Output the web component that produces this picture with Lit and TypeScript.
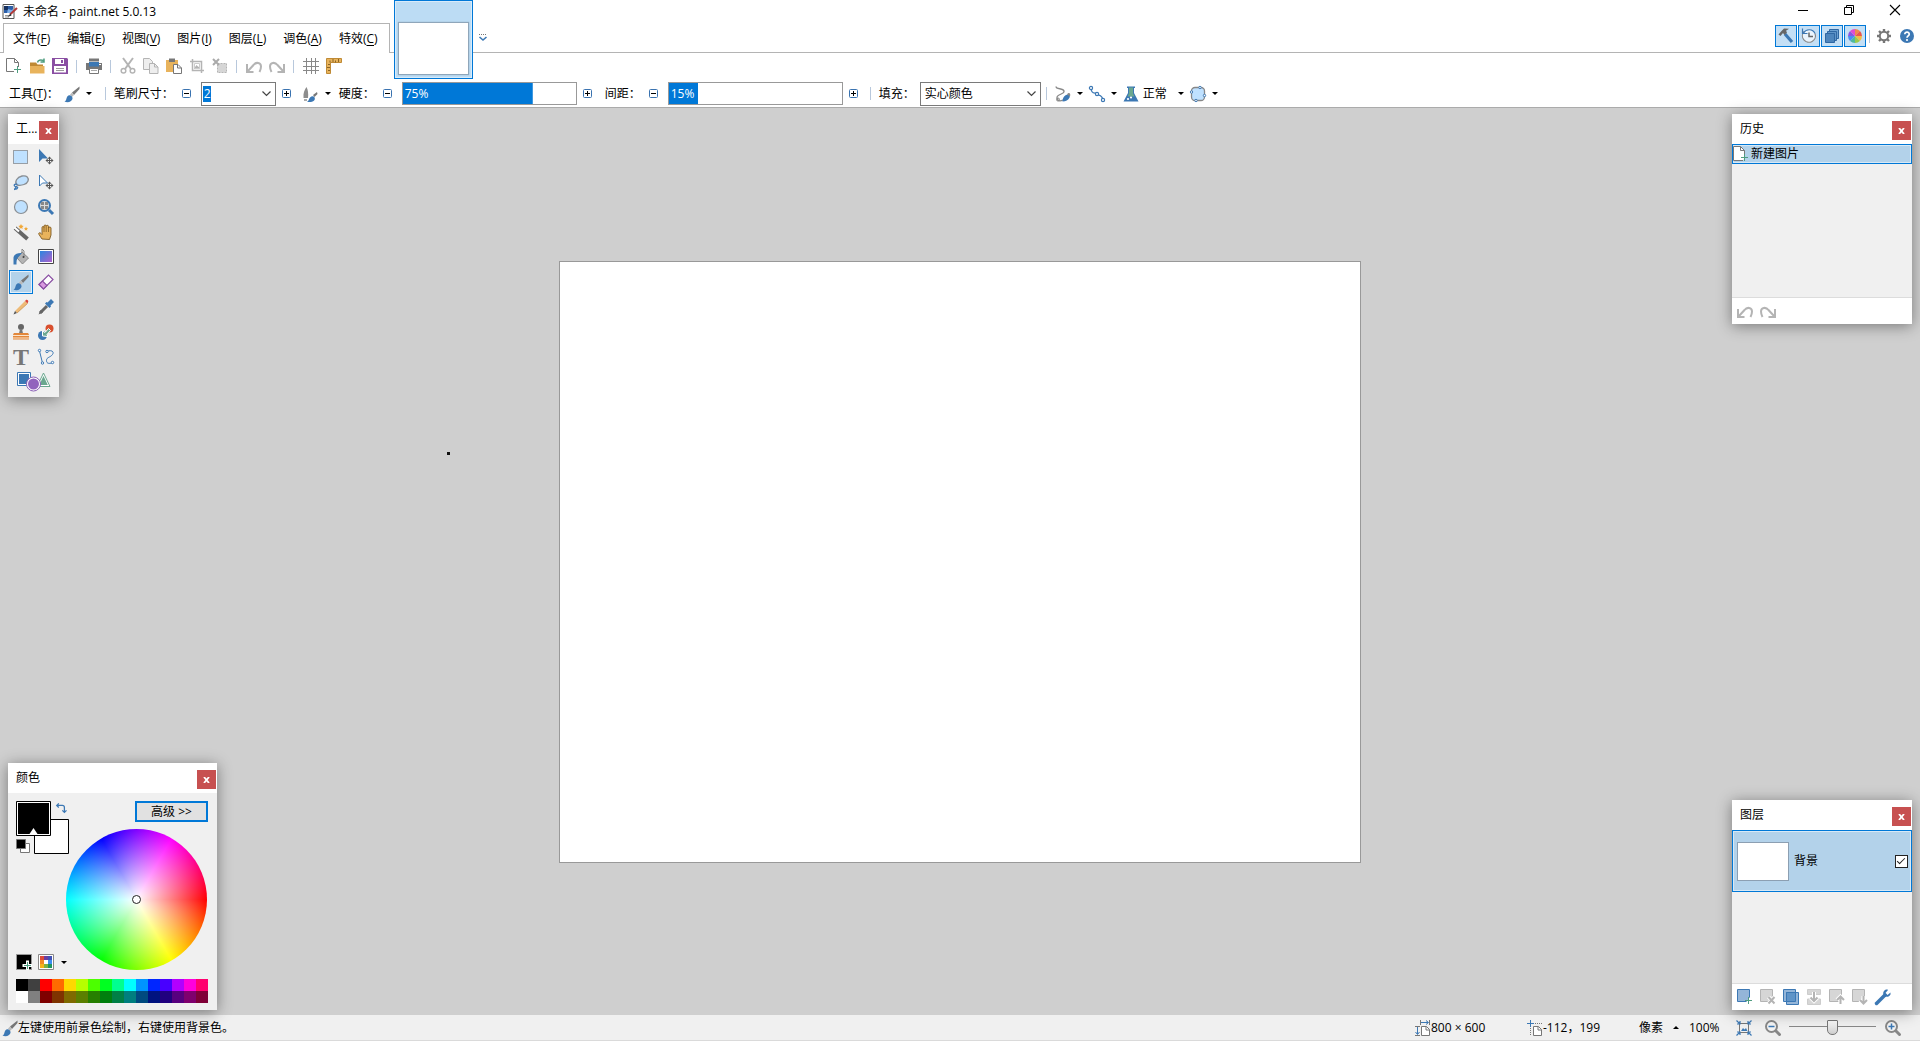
import { LitElement, html, css, svg, TemplateResult } from "lit";
import { customElement, property, state } from "lit/decorators.js";
import { classMap } from "lit/directives/class-map.js";

const GRAY = "#777";
const LIGHT = "#b4b4b4";
const BLUE = "#3c78b4";
const GREEN = "#4f9d80";
const AMBER = "#e8b35c";
const AMBER_DARK = "#bf8a35";

const page = svg`<path d="M2.5 .5h7l4 4V14.5h-11z" fill="#fff" stroke="${GRAY}"/><path d="M9.5 .5v4h4" fill="none" stroke="${GRAY}"/>`;
const undo = svg`<path d="M1 6v8h6.500" fill="none" stroke="${LIGHT}" stroke-width="2"/><path d="M1.500 13.500 7.500 7C10 3.800 15 4.200 15 8.500c0 2-.5 3.500-1.500 5.500" fill="none" stroke="${LIGHT}" stroke-width="2"/>`;
const redo = svg`<g transform="matrix(-1 0 0 1 16 0)">${undo}</g>`;
const brush = svg`<path d="M15.500 .5 8 6.500 10 9 15.500 3z" fill="${GRAY}"/><path d="M8 6.500 6 8.500 8 11 10 9z" fill="#bbb"/><path d="M.5 15.500c2-.5 1.500-2.500 2.500-4.500 1-2 3-2.500 4.500-1s1.500 3.500-.5 5-4.500 1.500-6.500 .5z" fill="${BLUE}"/>`;
const mover = svg`<path d="M11.500 8v7M8 11.500h7" stroke="#555"/><path d="M11.500 7.500l2 2.200h-4zM11.500 15.500l2-2.200h-4zM7.500 11.500l2.200-2v4zM15.500 11.500l-2.200-2v4z" fill="#555"/>`;
const lens = svg`<path d="M10.500 10.500 14.500 14.500" stroke="#888" stroke-width="3" stroke-linecap="round"/><circle cx="6.500" cy="6.500" r="5.500" fill="#f4f4f4" stroke="#888" stroke-width="2"/>`;

const ICONS: Record<string, TemplateResult> = {
  app: svg`<path d="M1 .5h11v14H1z" fill="#fff" stroke="#555"/><path d="M2 2h9v7H2z" fill="#2b5ea8"/><path d="M2 2h4v4H2z" fill="#16315f"/><path d="M6 5c2 0 3 2 5 0v4H5z" fill="#7fb0e8"/><path d="M3 11.500h6M3 13h4" stroke="#999"/><path d="M15 4 8 10.500" stroke="#b13a3a" stroke-width="2"/><path d="M8.500 9.500 5.500 13l4-1.500z" fill="#333"/>`,
  newFile: svg`<path d="M8 13.500H.5V.5h8l4 4V9" fill="#fff" stroke="${GRAY}"/><path d="M8.500 .5v4h4" fill="none" stroke="${GRAY}"/><path d="M11.500 8v7M8 11.500h7" stroke="${GREEN}"/>`,
  open: svg`<path d="M1 4.500h6l1.500 2H14V8H3.500L1 14z" fill="${AMBER_DARK}"/><path d="M1 8h14.500v7.500H1z" fill="${AMBER}"/><path d="M8.500 4.500C9 2 11.500 1.500 14.500 2.500M15 .5v3.500h-3.500" fill="none" stroke="${GREEN}" stroke-width="1.500"/>`,
  save: svg`<path d="M0 0h15l1 1v15H0z" fill="#8a4fa3"/><path d="M3 1h9v5H3z" fill="#fff"/><path d="M9 2h2v3H9z" fill="#8a4fa3"/><path d="M2 8h12v6.500H2z" fill="#fff"/><path d="M4 10.500h8M4 12.500h8" stroke="#999"/>`,
  print: svg`<path d="M3 .5h10v3H3z" fill="${GRAY}"/><path d="M0 5h16v7H0z" fill="${GRAY}"/><path d="M3 4h10v4.500H3z" fill="${BLUE}"/><path d="M3.500 10.500h9v5h-9z" fill="#fff" stroke="${GRAY}"/><path d="M5 12.500h6" stroke="#aaa"/><path d="M13 6h2v1h-2z" fill="#fff"/>`,
  cut: svg`<path d="M3 0 11 11M13 0 5 11" stroke="${LIGHT}" stroke-width="2"/><circle cx="3.500" cy="12.800" r="2.300" fill="none" stroke="${LIGHT}" stroke-width="1.500"/><circle cx="12.500" cy="12.800" r="2.300" fill="none" stroke="${LIGHT}" stroke-width="1.500"/>`,
  copy: svg`<path d="M.5 .5h6l3 3v8h-9z" fill="#eee" stroke="${LIGHT}"/><path d="M6.500 5.500h5l3.500 3.500v6.500H6.500z" fill="#eee" stroke="${LIGHT}"/><path d="M11.500 5.500v3.500h3.500" fill="none" stroke="${LIGHT}"/>`,
  paste: svg`<path d="M0 2h12v12H0z" fill="${AMBER}"/><path d="M3 .5h6V4H3z" fill="#777"/><path d="M7.500 6.500h4.500l3.500 3.500v5.500h-8z" fill="#fff" stroke="${GRAY}"/><path d="M11.500 6.500V10h4" fill="none" stroke="${GRAY}"/>`,
  crop: svg`<path d="M3.500 1v11.500H15M1 3.500h11.500V15" fill="none" stroke="${LIGHT}" stroke-width="1.500"/><path d="M5 10.500 7.500 7l2 2 1-1v3H5z" fill="${LIGHT}"/><path d="M5.500 5.500h5v5h-5z" fill="none" stroke="#ccc"/>`,
  deselect: svg`<path d="M5.500 5.500h9v9h-9z" fill="#d6d6d6" stroke="${LIGHT}" stroke-dasharray="2 1"/><path d="M1 1 7 7M7 1 1 7" stroke="#aaa" stroke-width="2"/>`,
  undo,
  redo,
  grid: svg`<path d="M3.500 0v16M8.500 0v16M12.500 0v16M0 3.500h16M0 8.500h16M0 12.500h16" stroke="#888"/>`,
  ruler: svg`<path d="M.5 .5h15v4h-11v11h-4z" fill="${AMBER}" stroke="${AMBER_DARK}"/><path d="M4 2.500v2M7 1v3M9.500 2.500v2M12.500 1v3M2 6.500h2M1 9.500h3M2 12.500h2" stroke="#8a6424"/>`,
  brush,
  brushShape: svg`<path d="M3.500 1C5 4 5.500 7 5 12H.5C0 7 1.500 4 3.500 1z" fill="#8d8d8d"/><path d="M14 6 10 9l1.500 2L14.500 8z" fill="${GRAY}"/><path d="M4 15.500c2-.5 1.500-2.500 3-4s3.500-2 4.500-.2 0 4-2.500 4.500-4 .2-5-.3z" fill="${BLUE}"/><path d="M1 13h3v2H1z" fill="#aaa"/>`,
  smooth: svg`<path d="M1 .5C1 4 8 1.500 9 5S1 8 2 12s4 3 6 2" fill="none" stroke="#888" stroke-width="1.300"/><circle cx="3" cy="13.500" r="1.500" fill="none" stroke="#888"/><path d="M7.500 15.500c0-4 3-7.500 6.500-6.800 2 1 .5 6.300-6.500 6.800z" fill="${BLUE}"/><path d="M12 8.500c2-3 4-1 3 2z" fill="#888"/>`,
  curve: svg`<path d="M2 2c0 7 5 4 6 6s5 0 6 6" fill="none" stroke="${BLUE}" stroke-width="1.300"/><g fill="#fff" stroke="${BLUE}" stroke-width="1.200"><circle cx="2" cy="2" r="1.600"/><circle cx="8" cy="8" r="1.600"/><circle cx="14" cy="14" r="1.600"/></g>`,
  flask: svg`<path d="M4 .5h8v1.500h-1v5l4.500 8.500H.5L5 7V2H4z" fill="${BLUE}"/><path d="M6 1.500h4v6l1.500 3h-7l1.500-3z" fill="#6aa78f"/><circle cx="5" cy="13" r="1.100" fill="#fff"/><circle cx="8" cy="11.500" r="1.100" fill="#fff"/>`,
  clip: svg`<rect x="1.500" y="1.500" width="13" height="13" rx="3.500" fill="#bfe1ff" stroke="#888" stroke-width="1.300"/><g fill="#fff" stroke="${BLUE}"><circle cx="10" cy="1.500" r="1.200"/><circle cx="1.500" cy="6" r="1.200"/><circle cx="14.500" cy="9.500" r="1.200"/><circle cx="6" cy="14.500" r="1.200"/></g>`,
  hammer: svg`<path d="M7 6 14 14" stroke="${BLUE}" stroke-width="3.200"/><path d="M.5 6.500 3.500 3 6 .5l5 .2-3 2 1 1.800L6.500 7 5 5 2.500 8z" fill="#666"/>`,
  clock: svg`<circle cx="8" cy="8" r="6.500" fill="#eaf4fc"/><path d="M3 3.500A6.500 6.500 0 1 0 14 5.500" fill="none" stroke="#888" stroke-width="1.200"/><path d="M2.500 5A6.500 6.500 0 0 1 14 5.500" fill="none" stroke="${BLUE}" stroke-width="1.200"/><path d="M1.500 .5v5h5" fill="none" stroke="${BLUE}" stroke-width="1.200"/><path d="M8 4.500v4h4" fill="none" stroke="#666" stroke-width="1.500"/>`,
  layers: svg`<path d="M5.500 1.500h9v9h-9z" fill="#6b9fd0" stroke="#2f67a3"/><path d="M3.500 3.500h9v9h-9z" fill="#5f94c8" stroke="#2f67a3"/><path d="M1.500 5.500h9v9h-9z" fill="#4d85bd" stroke="#2f67a3"/>`,
  wheel: svg`<path d="M8 8V1a7 7 0 0 1 4.950 2.050z" fill="#f08a4b"/><path d="M8 8 12.950 3.050A7 7 0 0 1 15 8z" fill="#e9574c"/><path d="M8 8H15a7 7 0 0 1-2.050 4.950z" fill="#f3bb45"/><path d="M8 8 12.950 12.950A7 7 0 0 1 8 15z" fill="#9ccb4a"/><path d="M8 8V15a7 7 0 0 1-4.950-2.050z" fill="#4fb9a0"/><path d="M8 8 3.050 12.950A7 7 0 0 1 1 8z" fill="#4a8df0"/><path d="M8 8H1a7 7 0 0 1 2.050-4.950z" fill="#8a55e0"/><path d="M8 8 3.050 3.050A7 7 0 0 1 8 1z" fill="#e04bd0"/>`,
  gear: svg`<path d="M8 1v14M1 8h14M3 3l10 10M13 3 3 13" stroke="${GRAY}" stroke-width="2.400"/><circle cx="8" cy="8" r="4.200" fill="#fff" stroke="${GRAY}" stroke-width="2"/>`,
  help: svg`<circle cx="8" cy="8" r="7" fill="${BLUE}"/><path d="M5.800 6.300C5.800 3.300 10.300 3.500 10.200 6.200 10.200 7.800 8 7.900 8 9.800" fill="none" stroke="#fff" stroke-width="1.700"/><circle cx="8" cy="12" r="1.100" fill="#fff"/>`,
  rectSelect: svg`<path d="M.5 1.500h14v13H.5z" fill="#bfe1ff" stroke="#555" stroke-dasharray="1 1"/>`,
  movePixels: svg`<path d="M1 0v13l3.500-3.500H10z" fill="${BLUE}"/>${mover}`,
  lasso: svg`<path d="M4 11C1 8 4 3 9 2s7 2 6 5-6 5-11 4z" fill="#bfe1ff" stroke="#8a8f94" stroke-width="1.300"/><path d="M1 15.500c2 0 1-3 3-3M4.500 10.500c-2-1-4 0-3 1.500s4 0 3 2-2 1-3 1" fill="none" stroke="${BLUE}" stroke-width="1.300"/>`,
  moveSelection: svg`<path d="M1.500 1v11l3-3H9.500z" fill="#fff" stroke="${BLUE}"/>${mover}`,
  ellipseSelect: svg`<circle cx="8" cy="8" r="6.500" fill="#bfe1ff" stroke="#8a8f94" stroke-width="1.200"/>`,
  zoom: svg`<path d="M11 11 15 15" stroke="${BLUE}" stroke-width="3"/><circle cx="6.500" cy="6.500" r="5.500" fill="#ddd" stroke="${BLUE}" stroke-width="2"/><path d="M3 3h3v3H3zM7 3h3v3H7zM3 7h3v3H3zM7 7h3v3H7z" fill="#888"/>`,
  wand: svg`<path d="M2 4 14.500 15" stroke="#666" stroke-width="4"/><path d="M1.500 3.500 6 7.500" stroke="#fff" stroke-width="2"/><path d="M8 0l.8 1.600 1.800 .3-1.300 1.300 .3 1.800L8 4.100 6.400 5l.3-1.800L5.400 1.900l1.800-.3zM13 2.500l.6 1.400 1.500 .2-1.100 1 .3 1.500-1.300-.7-1.300 .7 .3-1.500-1.100-1 1.500-.2z" fill="#f0a838"/>`,
  pan: svg`<path d="M4 15 1 10.500c-1-1.500 .8-2.500 2-1L4 10.500V3.500c0-1.300 2-1.300 2 0V2c0-1.300 2.200-1.300 2.200 0v.3c0-1.300 2.300-1.300 2.300 0V4c0-1.300 2.500-1.300 2.500 0v7l-1.500 4.500z" fill="${AMBER}" stroke="#7d5a25" stroke-width=".9"/><path d="M6 3.500v4.500M8.200 2.500v5.500M10.500 3.500v4.500" stroke="#7d5a25" stroke-width=".8"/>`,
  bucket: svg`<path d="M9 3 15.500 9 9.500 15 4 9z" fill="#b4b4b4" stroke="#888"/><path d="M9 3V0l2 2v6" fill="none" stroke="#888"/><circle cx="10.500" cy="8" r="1" fill="#444"/><path d="M9 4C5 3.500 1 5 .5 8.500v7H3.500c0-3.500 0-5 1.500-7z" fill="${BLUE}"/>`,
  gradient: svg`<defs><linearGradient id="gr" x1="0" y1="0" x2="1" y2="1"><stop offset="0" stop-color="#2a86e0"/><stop offset="1" stop-color="#b060cc"/></linearGradient></defs><path d="M.5 .5h15v14H.5z" fill="#fff" stroke="#444"/><path d="M2 2h12v11H2z" fill="url(#gr)"/>`,
  eraser: svg`<path d="M1 10.500 10.500 1 15 5.500 5.500 15z" fill="#fff" stroke="#8a4fa3" stroke-width="1.200"/><path d="M1 10.500 4.500 7 9 11.500 5.500 15z" fill="#d99be0" stroke="#8a4fa3" stroke-width="1.200"/>`,
  pencil: svg`<path d="M2 12 12 2l2.500 2.500L4 14z" fill="#eebb78"/><path d="M12 2l1.200-1.200c1-.6 2.600 .8 2 2L14.500 4.500z" fill="#d9463b"/><path d="M2 12 .5 15.500 4 14z" fill="#555"/><path d="M4 14 14.500 4.500" stroke="#c98d45" stroke-width=".7"/>`,
  picker: svg`<path d="M2 14 9 7" stroke="#666" stroke-width="3"/><path d="M.5 15.500 2.500 11l2.500 2.500z" fill="#666"/><path d="M7 4.500 11.500 9 13 7.500 12.500 6.500 16 3 13 0 9.500 3.500 8.500 3z" fill="${BLUE}"/>`,
  stamp: svg`<circle cx="8" cy="3" r="3" fill="#666"/><path d="M7 5h2l1 4.500H6z" fill="#777"/><path d="M1 9h14l1 1.500v5H0v-5z" fill="#e2873b"/><path d="M0 11.500h16M0 14h16" stroke="#fbe4cc"/>`,
  recolor: svg`<circle cx="11.500" cy="4.500" r="4" fill="#d9502f"/><circle cx="4.500" cy="11.500" r="4.500" fill="${BLUE}"/><path d="M4.500 12V7L7 8.500 10.500 4.500 12.500 6.500 9 10.500l1 2z" fill="#6aa78f" stroke="#fff"/>`,
  line: svg`<path d="M1.500 2 4.500 14M8.500 2.500c5-2 8 0 6 3s-6 2.500-6 6 3 3 5.500 2.500" fill="none" stroke="${BLUE}"/><g fill="#fff" stroke="${BLUE}"><circle cx="1.500" cy="1.500" r="1.200"/><circle cx="4.500" cy="14" r="1.200"/><circle cx="9" cy="2.500" r="1.200"/><circle cx="14.500" cy="13.500" r="1.200"/></g>`,
  swap: svg`<path d="M4 .5 1 3.500l3 3M1.500 3.500H9c2.500 0 3 1 3 3V13M9 10.500l3 3 3-3" fill="none" stroke="${BLUE}" stroke-width="1.800"/>`,
  historyNew: svg`<path d="M10 14.500H.5V.5h7l4 4V12" fill="#fff" stroke="${GRAY}"/><path d="M7.500 .5v4h4" fill="none" stroke="${GRAY}"/><path d="M11.500 8v7M8 11.500h7" stroke="${GREEN}"/>`,
  layerAdd: svg`<path d="M9.500 12.500H.5V.5h12v8" fill="#94b5d8" stroke="${BLUE}"/><path d="M11.500 8v7M8 11.500h7" stroke="${GREEN}"/>`,
  layerDelete: svg`<path d="M.5 .5h12v12H.5z" fill="#d6d6d6" stroke="${LIGHT}"/><path d="M8.500 8 14.500 14.500M14.500 8 8.500 14.500" stroke="#fff" stroke-width="4"/><path d="M8.500 8 14.500 14.500M14.500 8 8.500 14.500" stroke="${LIGHT}" stroke-width="2"/>`,
  layerCopy: svg`<path d="M.5 .5h12v12H.5z" fill="#94b5d8" stroke="${BLUE}"/><path d="M3.500 3.500h12v12h-12z" fill="#94b5d8" stroke="${BLUE}"/><path d="M3.500 3.500h9v9h-9z" fill="#5f94c8" stroke="${BLUE}"/>`,
  layerMerge: svg`<path d="M1.500 .5h13v5h-13zM1.500 10h13v5.500h-13z" fill="#d6d6d6" stroke="#ccc"/><path d="M8 3v9M4.500 8.500 8 12l3.500-3.500" fill="none" stroke="#fff" stroke-width="4"/><path d="M8 3v9M4.500 8.500 8 12l3.500-3.500" fill="none" stroke="${LIGHT}" stroke-width="2"/>`,
  layerUp: svg`<path d="M.5 .5h12v12H.5z" fill="#d6d6d6" stroke="${LIGHT}"/><path d="M11.500 15V8M8 11l3.500-3.500L15 11" fill="none" stroke="#fff" stroke-width="4"/><path d="M11.500 15V8M8 11l3.500-3.500L15 11" fill="none" stroke="${LIGHT}" stroke-width="2"/>`,
  layerDown: svg`<path d="M.5 .5h12v12H.5z" fill="#d6d6d6" stroke="${LIGHT}"/><path d="M11.500 7v7M8 11l3.500 3.500L15 11" fill="none" stroke="#fff" stroke-width="4"/><path d="M11.500 7v7M8 11l3.500 3.500L15 11" fill="none" stroke="${LIGHT}" stroke-width="2"/>`,
  wrench: svg`<path d="M1.500 14.500 10 6" stroke="${BLUE}" stroke-width="3.500" stroke-linecap="round"/><path d="M12.500 .5C9.500 0 7.500 3 8.500 5.500S13.500 9 15.500 5.500V3.500L12.500 6 10.500 4 13 1z" fill="${BLUE}"/>`,
  imageSize: svg`<path d="M6 2.500h7M11 .5l2.500 2L11 4.500" fill="none" stroke="${BLUE}"/><path d="M2.500 7v7M.5 12l2 2.500 2-2.500" fill="none" stroke="${BLUE}"/><path d="M5.500 0v5M14.500 0v5M0 6.500h5M0 15.500h5" stroke="#777"/><path d="M6.500 6.500h5l3 3v6h-8z" fill="#fff" stroke="${GRAY}"/><path d="M11 6.500V10h3.500" fill="none" stroke="${GRAY}"/>`,
  cursorAt: svg`<path d="M0 3.500h7M3.500 0v7" stroke="${BLUE}"/><path d="M8 3.500h8M3.500 8v8" stroke="#777" stroke-dasharray="1 1"/><path d="M6.500 6.500h5l3 3v6h-8z" fill="#fff" stroke="${GRAY}"/><path d="M11 6.500V10h3.500" fill="none" stroke="${GRAY}"/>`,
  fit: svg`<path d="M3 3.500h10M3 12.500h10M3.500 3v10M12.500 3v10" stroke="#777"/><path d="M5 11l2-3 1.500 1.500L10 8l1.500 3z" fill="${BLUE}"/><path d="M.5 .5 3.500 3.500M15.500 .5 12.500 3.500M.5 15.500 3.500 12.500M15.500 15.500 12.500 12.500M1 4h3V1M15 4h-3V1M1 12h3v3M15 12h-3v3" fill="none" stroke="${BLUE}" stroke-width="1.200"/>`,
  zoomOut: svg`${lens}<path d="M3.500 6.500h6" stroke="${BLUE}" stroke-width="1.500"/>`,
  zoomIn: svg`${lens}<path d="M3.500 6.500h6M6.500 3.500v6" stroke="${BLUE}" stroke-width="1.500"/>`,
  minimize: svg`<path d="M3 8.500h10" stroke="#000"/>`,
  restore: svg`<path d="M3.500 5.500h7v7h-7zM5.500 5.500v-2h7v7h-2" fill="none" stroke="#000"/>`,
  close: svg`<path d="M3 3 13 13M13 3 3 13" stroke="#000" stroke-width="1.100"/>`,
  minus: svg`<rect x="3.500" y="3.500" width="8" height="8" rx="1" fill="#fff" stroke="#3a73b0"/><path d="M5 7.500h5" stroke="#000"/>`,
  plus: svg`<rect x="3.500" y="3.500" width="8" height="8" rx="1" fill="#fff" stroke="#3a73b0"/><path d="M5 7.500h5M7.500 5v5" stroke="#000"/>`,
  overflow: svg`<path d="M4 6.500h8" stroke="#777" stroke-dasharray="1 1"/><path d="M4.500 9 8 12l3.500-3" fill="none" stroke="${BLUE}" stroke-width="1.600"/>`,
};

const icon = (name: string) =>
  html`<svg class="ic" viewBox="0 0 16 16" width="16" height="16" aria-hidden="true">${ICONS[name] ?? page}</svg>`;

const button = css`
  button {
    font: inherit;
    color: inherit;
    background: none;
    border: 0;
    padding: 0;
    margin: 0;
    display: inline-flex;
    align-items: center;
    justify-content: center;
  }
  .ic {
    display: block;
    flex: none;
    overflow: visible;
  }
`;

@customElement("float-panel")
class FloatPanel extends LitElement {
  @property() heading = "";
  static styles = [
    button,
    css`
      :host {
        display: flex;
        flex-direction: column;
        background: #f0f0f0;
        box-shadow: 0 2px 14px rgba(0, 0, 0, 0.42);
      }
      header {
        display: flex;
        align-items: center;
        justify-content: space-between;
        height: 30px;
        padding: 0 1px 0 8px;
        background: #fff;
        white-space: nowrap;
      }
      h2 {
        margin: 0;
        font-size: 12px;
        font-weight: 400;
      }
      .x {
        width: 19px;
        height: 19px;
        margin-top: 3px;
        background: #c75050;
      }
      .body {
        flex: 1;
        display: flex;
        flex-direction: column;
      }
    `,
  ];
  render() {
    return html`<header>
        <h2>${this.heading}</h2>
        <button class="x" aria-label="关闭">
          <svg viewBox="0 0 7 6" width="7" height="6" aria-hidden="true">
            <path d="M1 0 6 6M6 0 1 6" stroke="#fff" stroke-width="1.800" />
          </svg>
        </button>
      </header>
      <div class="body"><slot></slot></div>`;
  }
}

const MENUS = [
  ["文件", "F"],
  ["编辑", "E"],
  ["视图", "V"],
  ["图片", "I"],
  ["图层", "L"],
  ["调色", "A"],
  ["特效", "C"],
];

const TOOLBAR = [
  ["newFile", "open", "save"],
  ["print"],
  ["cut", "copy", "paste", "crop", "deselect"],
  ["undo", "redo"],
  ["grid", "ruler"],
];

const TOOLS = [
  "rectSelect", "movePixels", "lasso", "moveSelection", "ellipseSelect", "zoom",
  "wand", "pan", "bucket", "gradient", "brush", "eraser",
  "pencil", "picker", "stamp", "recolor", "text", "line",
];

const PALETTE = [
  "#000000", "#404040", "#ff0000", "#ff6a00", "#ffd800", "#b6ff00", "#4cff00", "#00ff21",
  "#00ff90", "#00ffff", "#0094ff", "#0026ff", "#4800ff", "#b200ff", "#ff00dc", "#ff006e",
  "#ffffff", "#808080", "#7f0000", "#7f3300", "#7f6a00", "#5b7f00", "#267f00", "#007f0e",
  "#007f46", "#007f7f", "#004a7f", "#00137f", "#21007f", "#57007f", "#7f006e", "#7f0037",
];

@customElement("app-root")
class AppRoot extends LitElement {
  @state() private tool = "brush";
  @state() private hardness = 75;
  @state() private spacing = 15;

  static styles = [
    button,
    css`
      :host {
        display: flex;
        flex-direction: column;
        min-height: 100vh;
        background: #fff;
        color: #000;
        font: 12px/16px "Open Sans", "Noto Sans CJK SC", sans-serif;
        white-space: nowrap;
      }
      .top {
        position: relative;
        border-bottom: 1px solid #ababab;
      }
      .title {
        display: flex;
        align-items: center;
        height: 23px;
        padding: 0 2px;
      }
      .title h1 {
        flex: 1;
        margin: 0 0 0 5px;
        font-size: 12px;
        font-weight: 400;
      }
      .title button {
        align-self: flex-start;
        width: 46px;
        height: 20px;
      }
      .menurow {
        display: flex;
        height: 30px;
      }
      .lead,
      .rest {
        border-bottom: 1px solid #b4b4b4;
      }
      .lead {
        width: 3px;
      }
      nav {
        display: flex;
        padding: 0 2px 0 1px;
        border: 1px solid #b4b4b4;
        border-bottom: 0;
      }
      nav button {
        padding: 0 9px 0 8px;
      }
      u {
        text-underline-offset: 2px;
      }
      .rest {
        flex: 1;
        display: flex;
        align-items: center;
        gap: 1px;
        padding: 0 2px 3px 82px;
      }
      .fill {
        flex: 1;
      }
      .rest button {
        width: 22px;
        height: 22px;
      }
      .rest .toggle {
        box-sizing: border-box;
        border: 1px solid #0078d7;
        background: #c4dff5;
      }
      .bar {
        box-sizing: border-box;
        display: flex;
        align-items: center;
        height: 27px;
        padding: 0 0 1px 2px;
      }
      .bar button {
        width: 23px;
        height: 23px;
      }
      .sep {
        width: 1px;
        height: 13px;
        margin: 0 5px;
        background: #b8c8dc;
      }
      .rest .sep {
        margin: 0 2px;
      }
      .opts {
        display: flex;
        align-items: center;
        height: 27px;
        padding-left: 9px;
      }
      .opts button {
        height: 22px;
      }
      .opts label {
        margin-left: 3px;
      }
      .opts .next {
        margin-left: 6px;
      }
      .drop {
        gap: 6px;
        padding: 0 3px;
      }
      .drop span {
        margin: 0 5px 0 -2px;
      }
      .drop.tool {
        margin: 0 5px 0 2px;
      }
      .minus {
        width: 27px;
      }
      .plus {
        width: 22px;
      }
      .caret {
        width: 0;
        border: 3px solid transparent;
        border-top-color: #000;
        border-bottom: 0;
      }
      .caret.up {
        border: 3px solid transparent;
        border-bottom-color: #000;
        border-top: 0;
      }
      .combo,
      .pick {
        display: grid;
        align-items: center;
        box-sizing: border-box;
        height: 24px;
        border: 1px solid #7a7a7a;
        background: #fff;
      }
      .combo > *,
      .pick > * {
        grid-area: 1 / 1;
      }
      .combo {
        width: 75px;
      }
      .pick {
        width: 121px;
        margin-left: 5px;
      }
      .combo input,
      .pick select {
        appearance: none;
        box-sizing: border-box;
        width: 100%;
        border: 0;
        padding: 0 0 0 2px;
        outline: 0;
        font: inherit;
        color: #000;
        background: none;
      }
      .pick select {
        padding-left: 4px;
      }
      .combo input {
        height: 16px;
        color: #fff;
        background: linear-gradient(#0078d7, #0078d7) 1px 0 / 8px 16px no-repeat;
      }
      .chev {
        justify-self: end;
        margin-right: 4px;
        pointer-events: none;
      }
      .meter {
        display: grid;
        align-items: center;
        width: 175px;
        height: 23px;
        box-sizing: border-box;
        border: 1px solid #999;
      }
      .meter > * {
        grid-area: 1 / 1;
      }
      .meter input {
        appearance: none;
        width: 100%;
        height: 21px;
        margin: 0;
        background: linear-gradient(#0078d7, #0078d7) 0 0 / var(--v) 100% no-repeat;
      }
      .meter input::-webkit-slider-thumb {
        appearance: none;
        width: 1px;
        height: 21px;
      }
      .meter output {
        padding-left: 2px;
        color: #fff;
        pointer-events: none;
      }
      .thumb {
        position: absolute;
        left: 394px;
        top: 0;
        box-sizing: border-box;
        width: 79px;
        height: 79px;
        border: 1px solid #0078d7;
        background: #bcdcf4;
        box-shadow: inset 0 0 0 1px #d8ebfa;
        flex-direction: column;
        justify-content: flex-end;
      }
      .thumb i {
        display: block;
        width: 69px;
        height: 51px;
        margin-bottom: 4px;
        background: #fff;
        box-shadow: 0 0 1px 1px #8fa6ba;
      }
      main {
        position: relative;
        z-index: 1;
        flex: 1;
        display: flex;
        align-items: center;
        justify-content: center;
        background: #cfcfcf;
      }
      .canvas {
        width: 800px;
        height: 600px;
        background: #fff;
        box-shadow: 0 0 0 1px #999;
      }
      .cursor {
        position: absolute;
        left: 447px;
        top: 344px;
        width: 3px;
        height: 3px;
        background: #111;
      }
      float-panel {
        position: absolute;
      }
      .ptools {
        left: 8px;
        top: 6px;
        width: 51px;
      }
      .phistory,
      .players {
        right: 8px;
        width: 180px;
        height: 210px;
      }
      .phistory {
        top: 6px;
      }
      .players {
        bottom: 5px;
      }
      .pcolors {
        left: 8px;
        bottom: 5px;
        width: 209px;
      }
      .tools {
        display: grid;
        grid-template-columns: 24px 24px;
        gap: 1px;
        padding: 1px 1px 3px;
      }
      .tools button {
        box-sizing: border-box;
        height: 24px;
      }
      .tools .on {
        border: 1px solid #0078d7;
        background: #b3d2ea;
        box-shadow: inset 0 0 0 1px #e4f0fa;
      }
      .tools .wide {
        grid-column: 1 / 3;
      }
      .glyph {
        font: 700 24px/24px "Liberation Serif", serif;
        color: #777;
      }
      .list {
        flex: 1;
        margin: 0;
        padding: 0;
        list-style: none;
      }
      .row {
        box-sizing: border-box;
        display: flex;
        align-items: center;
        border: 1px solid #0078d7;
        background: #b3d2ea;
        box-shadow: inset 0 0 0 1px #d8e9f6;
      }
      .row.h {
        height: 20px;
        gap: 2px;
      }
      .row.l {
        height: 62px;
        gap: 5px;
        padding: 0 3px 0 4px;
      }
      .row.l i {
        box-sizing: border-box;
        width: 52px;
        height: 39px;
        border: 1px solid #8c9fb2;
        background: #fff;
      }
      .row.l label {
        flex: 1;
      }
      .row input {
        appearance: none;
        box-sizing: border-box;
        width: 13px;
        height: 13px;
        margin: 0;
        border: 1px solid #222;
        background: #fff;
        display: grid;
      }
      .row input:checked::after {
        content: "";
        width: 7px;
        height: 3px;
        margin: 2px 0 0 1px;
        border: solid #222;
        border-width: 0 0 1px 1px;
        transform: rotate(-45deg);
      }
      .foot {
        display: flex;
        align-items: center;
        gap: 7px;
        height: 26px;
        padding-left: 5px;
        border-top: 1px solid #dcdcdc;
        background: #fff;
      }
      .colors {
        display: grid;
        grid-template-columns: 54px 138px;
        padding: 8px 9px 7px 8px;
      }
      .left {
        display: flex;
        flex-direction: column;
        justify-content: space-between;
        height: 169px;
      }
      .right {
        display: flex;
        flex-direction: column;
        align-items: flex-end;
        gap: 7px;
      }
      .more {
        box-sizing: border-box;
        width: 73px;
        height: 21px;
        border: 2px solid #0078d7;
        background: #e1e1e1;
      }
      .disc {
        display: grid;
        place-items: center;
        width: 141px;
        height: 141px;
        margin-right: 1px;
        border-radius: 50%;
        background: radial-gradient(closest-side, #fff, rgba(255, 255, 255, 0)),
          conic-gradient(from 90deg, #f00, #ff0, #0f0, #0ff, #00f, #f0f, #f00);
      }
      .disc i {
        width: 7px;
        height: 7px;
        border: 1px solid #222;
        border-radius: 50%;
        background: #fff;
      }
      .mini {
        display: flex;
        align-items: center;
        gap: 6px;
      }
      .mini .caret {
        margin-left: 1px;
      }
      .swatches {
        grid-column: 1 / 3;
        display: grid;
        grid-template-columns: repeat(16, 12px);
        grid-auto-rows: 12px;
        margin-top: 9px;
      }
      .status {
        display: flex;
        align-items: center;
        box-sizing: border-box;
        height: 26px;
        padding: 0 19px 0 2px;
        background: #f0f0f0;
        border-bottom: 1px solid #dadada;
      }
      .status span {
        display: flex;
      }
      .hint {
        flex: 1;
      }
      .size,
      .pos {
        width: 112px;
      }
      .status .unit {
        gap: 10px;
        width: 50px;
        justify-content: flex-start;
      }
      .pct {
        width: 47px;
      }
      .zoomer {
        display: flex;
        align-items: center;
        gap: 7px;
      }
      .zoomer .out {
        margin-left: 6px;
      }
      .zoomer input {
        appearance: none;
        width: 87px;
        height: 16px;
        margin: 0 2px 0 1px;
        background: linear-gradient(#888, #888) 0 6px / 100% 1px no-repeat;
      }
      .zoomer input::-webkit-slider-thumb {
        appearance: none;
        width: 11px;
        height: 15px;
        background: linear-gradient(#fafafa, #ccc);
        border: 1px solid #777;
        border-radius: 1px 1px 5px 5px;
      }
    `,
  ];

  private meter(label: string, value: number, fill: number, set: (n: number) => void) {
    return html`<div class="meter">
      <input
        type="range"
        min="0"
        max="100"
        aria-label=${label}
        .value=${String(value)}
        style="--v:${fill}%"
        @input=${(e: Event) => set(Number((e.target as HTMLInputElement).value))}
      />
      <output>${value}%</output>
    </div>`;
  }

  private step(name: "minus" | "plus", label: string) {
    return html`<button class=${name} aria-label=${label}>${icon(name)}</button>`;
  }

  private drop(name: string, label: string, text = "", cls = "drop") {
    return html`<button class=${cls} aria-label=${label}>${icon(name)}${text ? html`<span>${text}</span>` : ""}<i class="caret"></i></button>`;
  }

  private chevron() {
    return html`<svg class="chev" viewBox="0 0 9 6" width="9" height="6" aria-hidden="true">
      <path d="M.5 .5 4.500 4.500 8.500 .5" fill="none" stroke="#444" stroke-width="1.200" />
    </svg>`;
  }

  render() {
    return html`
      <div class="top">
        <div class="title">
          ${icon("app")}
          <h1>未命名 - paint.net 5.0.13</h1>
          <button aria-label="最小化">${icon("minimize")}</button>
          <button aria-label="还原">${icon("restore")}</button>
          <button aria-label="关闭">${icon("close")}</button>
        </div>
        <div class="menurow">
          <div class="lead"></div>
          <nav>${MENUS.map(([t, k]) => html`<button>${t}(<u>${k}</u>)</button>`)}</nav>
          <div class="rest">
            <button aria-label="图像列表">${icon("overflow")}</button>
            <div class="fill"></div>
            <button class="toggle" aria-label="工具">${icon("hammer")}</button>
            <button class="toggle" aria-label="历史">${icon("clock")}</button>
            <button class="toggle" aria-label="图层">${icon("layers")}</button>
            <button class="toggle" aria-label="颜色">${icon("wheel")}</button>
            <div class="sep"></div>
            <button aria-label="设置">${icon("gear")}</button>
            <button aria-label="帮助">${icon("help")}</button>
          </div>
        </div>
        <div class="bar">
          ${TOOLBAR.map(
            (g, i) => html`${i ? html`<div class="sep"></div>` : ""}${g.map(
              (n) => html`<button aria-label=${n}>${icon(n)}</button>`
            )}`
          )}
        </div>
        <div class="opts">
          <span>工具(<u>T</u>)：</span>
          ${this.drop("brush", "工具", "", "drop tool")}
          <div class="sep"></div>
          <label for="size">笔刷尺寸：</label>
          ${this.step("minus", "减小尺寸")}
          <div class="combo"><input id="size" value="2" />${this.chevron()}</div>
          ${this.step("plus", "增大尺寸")} ${this.drop("brushShape", "笔刷形状", "", "drop tool")}
          <span>硬度：</span>
          ${this.step("minus", "减小硬度")}
          ${this.meter("硬度", this.hardness, this.hardness, (n) => (this.hardness = n))}
          ${this.step("plus", "增大硬度")}
          <span class="next">间距：</span>
          ${this.step("minus", "减小间距")}
          ${this.meter("间距", this.spacing, this.spacing + 2, (n) => (this.spacing = n))}
          ${this.step("plus", "增大间距")}
          <div class="sep"></div>
          <label for="fillmode">填充：</label>
          <div class="pick">
            <select id="fillmode"><option>实心颜色</option></select>
            ${this.chevron()}
          </div>
          <div class="sep"></div>
          ${this.drop("smooth", "平滑")} ${this.drop("curve", "曲线")}
          ${this.drop("flask", "混合模式", "正常")} ${this.drop("clip", "选区剪裁")}
        </div>
        <button class="thumb" aria-label="未命名"><i></i></button>
      </div>

      <main>
        <div class="canvas"></div>
        <div class="cursor"></div>

        <float-panel class="ptools" heading="工...">
          <div class="tools">
            ${TOOLS.map(
              (t) => html`<button
                class=${classMap({ on: t === this.tool })}
                aria-label=${t}
                @click=${() => (this.tool = t)}
              >
                ${t === "text" ? html`<span class="glyph">T</span>` : icon(t)}
              </button>`
            )}
            <button class="wide" aria-label="shapes">
              <svg viewBox="0 0 34 20" width="34" height="20" aria-hidden="true">
                <path d="M.5 .5h13v13H.5z" fill="#fff" stroke="#3c78b4" />
                <path d="M2 2h10v10H2z" fill="#3c78b4" />
                <path d="M26.500 1 33 14.500H20z" fill="#fff" stroke="#6aa78f" />
                <path d="M26.500 4 30.800 13h-8.600z" fill="#6aa78f" />
                <circle cx="16.500" cy="12" r="7" fill="#fff" stroke="#8a5fb5" />
                <circle cx="16.500" cy="12" r="5.500" fill="#9263bd" />
              </svg>
            </button>
          </div>
        </float-panel>

        <float-panel class="phistory" heading="历史">
          <ul class="list">
            <li class="row h">${icon("historyNew")}新建图片</li>
          </ul>
          <div class="foot">
            <button aria-label="撤销">${icon("undo")}</button>
            <button aria-label="重做">${icon("redo")}</button>
          </div>
        </float-panel>

        <float-panel class="pcolors" heading="颜色">
          <div class="colors">
            <div class="left">
              <svg viewBox="0 0 54 54" width="54" height="54" overflow="visible" aria-hidden="true">
                <path d="M18.500 18.500h34v34h-34z" fill="#fff" stroke="#000" />
                <path d="M.5 .5h34v34H.5z" fill="#fff" stroke="#000" />
                <path d="M2 2h31v31H2z" fill="#000" />
                <path d="M17.500 27 21.500 33h-8z" fill="#fff" />
                <path d="M4.500 42.500h9v9h-9z" fill="#fff" stroke="#777" />
                <path d="M.5 38.500h9v9h-9z" fill="#000" stroke="#777" />
                <g transform="translate(40 2) scale(.7)">${ICONS.swap}</g>
              </svg>
              <div class="mini">
                <button aria-label="添加颜色">
                  <svg viewBox="0 0 16 16" width="16" height="16" aria-hidden="true">
                    <path d="M.5 .5h15v15H.5z" fill="#000" stroke="#999" />
                    <path d="M11.500 6.500v10M6.500 11.500h10" stroke="#fff" stroke-width="3" />
                    <path d="M11.500 8v7M8 11.500h7" stroke="#4f9d80" />
                  </svg>
                </button>
                <button aria-label="调色板">
                  <svg viewBox="0 0 16 16" width="16" height="16" aria-hidden="true">
                    <path d="M.5 .5h15v15H.5z" fill="#fff" stroke="#888" />
                    <path d="M2 2h4v4H2z" fill="#dd4b39" />
                    <path d="M6 2h4v4H6z" fill="#6b3fa0" />
                    <path d="M10 2h4v4h-4z" fill="#3f51b5" />
                    <path d="M2 6h4v4H2z" fill="#f08a24" />
                    <path d="M10 6h4v4h-4z" fill="#3b8df0" />
                    <path d="M2 10h4v4H2z" fill="#f4b41a" />
                    <path d="M6 10h4v4H6z" fill="#7cb342" />
                    <path d="M10 10h4v4h-4z" fill="#1f9460" />
                  </svg>
                </button>
                <i class="caret"></i>
              </div>
            </div>
            <div class="right">
              <button class="more">高级 &gt;&gt;</button>
              <div class="disc"><i></i></div>
            </div>
            <div class="swatches">
              ${PALETTE.map((c) => html`<button aria-label=${c} style="background:${c}"></button>`)}
            </div>
          </div>
        </float-panel>

        <float-panel class="players" heading="图层">
          <div class="list">
            <div class="row l">
              <i></i><label for="vis">背景</label><input id="vis" type="checkbox" checked />
            </div>
          </div>
          <div class="foot">
            ${["layerAdd", "layerDelete", "layerCopy", "layerMerge", "layerUp", "layerDown", "wrench"].map(
              (n) => html`<button aria-label=${n}>${icon(n)}</button>`
            )}
          </div>
        </float-panel>
      </main>

      <div class="status">
        <span class="hint">${icon("brush")}左键使用前景色绘制，右键使用背景色。</span>
        <span class="size">${icon("imageSize")}800 × 600</span>
        <span class="pos">${icon("cursorAt")}-112，199</span>
        <button class="unit">像素<i class="caret up"></i></button>
        <span class="pct">100%</span>
        <div class="zoomer">
          <button aria-label="适应窗口">${icon("fit")}</button>
          <button class="out" aria-label="缩小">${icon("zoomOut")}</button>
          <input type="range" min="0" max="100" value="50" aria-label="缩放" />
          <button aria-label="放大">${icon("zoomIn")}</button>
        </div>
      </div>
    `;
  }
}
